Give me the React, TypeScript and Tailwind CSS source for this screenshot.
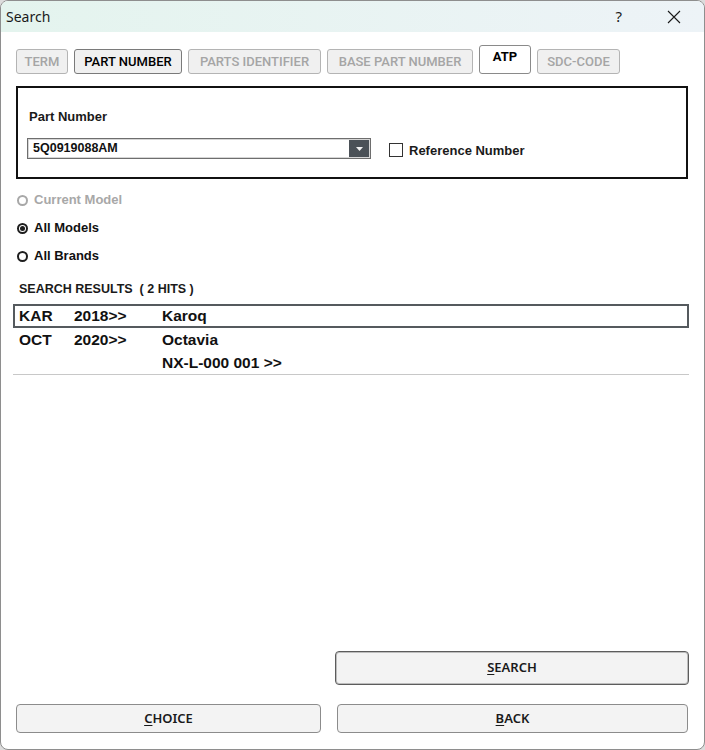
import { useState } from "react"

const tabs = [
  { label: "TERM", state: "disabled", w: "w-[52px]" },
  { label: "PART NUMBER", state: "normal", w: "w-[108px]" },
  { label: "PARTS IDENTIFIER", state: "disabled", w: "w-[133px]" },
  { label: "BASE PART NUMBER", state: "disabled", w: "w-[146px]" },
  { label: "ATP", state: "active", w: "w-[52px]" },
  { label: "SDC-CODE", state: "disabled", w: "w-[83px]" },
]

const results = [
  { code: "KAR", year: "2018>>", name: "Karoq" },
  { code: "OCT", year: "2020>>", name: "Octavia" },
  { code: "", year: "", name: "NX-L-000 001 >>" },
]

function Radio({ checked, disabled, label }: { checked?: boolean; disabled?: boolean; label: string }) {
  return (
    <div className="flex h-[28px] items-center gap-[6px] pl-[4px]">
      <span
        className={
          "flex h-[11px] w-[11px] items-center justify-center rounded-full border-2 " +
          (disabled ? "border-[#a8a8a8]" : "border-[#1e1e1e]")
        }
      >
        {checked && <span className="h-[5px] w-[5px] rounded-full bg-[#1e1e1e]" />}
      </span>
      <span
        className={
          "font-['Liberation_Sans',Arial,sans-serif] text-[13px] font-bold " +
          (disabled ? "text-[#a8a8a8]" : "text-[#111]")
        }
      >
        {label}
      </span>
    </div>
  )
}

function WinButton({ hotkey, rest, className }: { hotkey: string; rest: string; className: string }) {
  return (
    <button
      className={
        "flex items-center justify-center rounded-[4px] bg-[#f3f3f3] font-['Noto_Sans',sans-serif] text-[13px] font-semibold text-[#1a1a1a] " +
        className
      }
    >
      <span className="underline underline-offset-2">{hotkey}</span>
      {rest}
    </button>
  )
}

export default function App() {
  const [selected, setSelected] = useState(0)

  return (
    <div className="h-[750px] w-[705px] bg-[#dcdcdc]">
      <div className="flex h-full w-full flex-col overflow-hidden rounded-[8px] border border-[#8e8e8e] bg-white">
        {/* title bar */}
        <div className="flex h-[31px] shrink-0 items-center bg-gradient-to-r from-[#e4f4ee] to-[#edf3f7] pl-[5px] font-['Noto_Sans',sans-serif] text-[14px] text-[#1a1a1a]">
          <span>Search</span>
          <span className="ml-auto mr-[45px] text-[15px]">?</span>
          <svg width="14" height="14" viewBox="0 0 14 14" className="mr-[23px]">
            <path d="M1 1 L13 13 M13 1 L1 13" stroke="#1a1a1a" strokeWidth="1.1" />
          </svg>
        </div>

        <div className="flex flex-1 flex-col px-[12px] pb-[16px]">
          {/* tabs */}
          <div className="ml-[3px] mt-[13px] flex items-end gap-[6px]">
            {tabs.map((t) => (
              <div
                key={t.label}
                className={
                  "flex items-center justify-center rounded-[3px] border font-['Roboto',sans-serif] text-[13px] " +
                  t.w +
                  " " +
                  (t.state === "active"
                    ? "h-[29px] border-[#8a8a8a] bg-white pb-[5px] font-bold text-black"
                    : t.state === "normal"
                      ? "h-[25px] border-[#7a7a7a] bg-[#f0f0f0] font-medium text-black"
                      : "h-[25px] border-[#b4b4b4] bg-[#f0f0f0] font-medium text-[#a5a5a5]")
                }
              >
                {t.label}
              </div>
            ))}
          </div>

          {/* part number panel */}
          <div className="ml-[3px] mr-[4px] mt-[12px] border-2 border-[#111] pb-[18px] pl-[9px] pt-[21px]">
            <div className="h-[16px] pl-[2px] font-['Liberation_Sans',Arial,sans-serif] text-[13px] font-bold leading-[16px] text-[#1a1a1a]">
              Part Number
            </div>
            <div className="mt-[13px] flex h-[21px] items-start">
              <div className="flex h-[21px] w-[344px] items-center border border-[#6e6e6e] bg-white shadow-[inset_0_0_0_1px_#d6d6d6]">
                <span className="flex-1 pl-[5px] font-['Liberation_Sans',Arial,sans-serif] text-[12.5px] font-bold text-[#111]">
                  5Q0919088AM
                </span>
                <span className="mr-[1px] flex h-[17px] w-[20px] items-center justify-center bg-[#4b5157]">
                  <svg width="7" height="4" viewBox="0 0 7 4">
                    <path d="M0 0 H7 L3.5 4 Z" fill="#f2f2f2" />
                  </svg>
                </span>
              </div>
              <span className="ml-[18px] mt-[5px] h-[14px] w-[14px] border border-[#333] bg-white" />
              <span className="ml-[6px] mt-[5px] font-['Liberation_Sans',Arial,sans-serif] text-[13px] font-bold leading-[16px] text-[#1a1a1a]">
                Reference Number
              </span>
            </div>
          </div>

          {/* model scope */}
          <div className="mt-[7px]">
            <Radio disabled label="Current Model" />
            <Radio checked label="All Models" />
            <Radio label="All Brands" />
          </div>

          <div className="mt-[9px] flex h-[20px] items-center pl-[6px] font-['Liberation_Sans',Arial,sans-serif] text-[12.5px] font-bold text-[#1a1a1a] whitespace-pre">
            SEARCH RESULTS  ( 2 HITS )
          </div>

          {/* results list */}
          <div className="mr-[3px] mt-[5px] border-b border-[#c8c8c8] font-['Liberation_Sans',Arial,sans-serif] text-[15.5px] font-bold text-[#111]">
            {results.map((r, i) => (
              <div
                key={i}
                onClick={() => setSelected(i)}
                className={
                  "flex items-center border-2 pl-[4px] " +
                  (i === 0 ? "h-[24px] " : "h-[23px] ") +
                  (selected === i ? "border-[#555a5e]" : "border-transparent")
                }
              >
                <span className="w-[55px]">{r.code}</span>
                <span className="w-[88px]">{r.year}</span>
                <span>{r.name}</span>
              </div>
            ))}
          </div>

          {/* actions */}
          <div className="mt-auto flex justify-end">
            <WinButton
              hotkey="S"
              rest="EARCH"
              className="mr-[3px] h-[34px] w-[354px] border border-[#5c5c5c] shadow-[inset_0_0_0_1px_#bdbdbd]"
            />
          </div>
          <div className="mt-[19px] flex justify-between">
            <WinButton hotkey="C" rest="HOICE" className="ml-[3px] h-[29px] w-[305px] border border-[#8c8c8c]" />
            <WinButton hotkey="B" rest="ACK" className="mr-[4px] h-[29px] w-[351px] border border-[#8c8c8c]" />
          </div>
        </div>
      </div>
    </div>
  )
}
